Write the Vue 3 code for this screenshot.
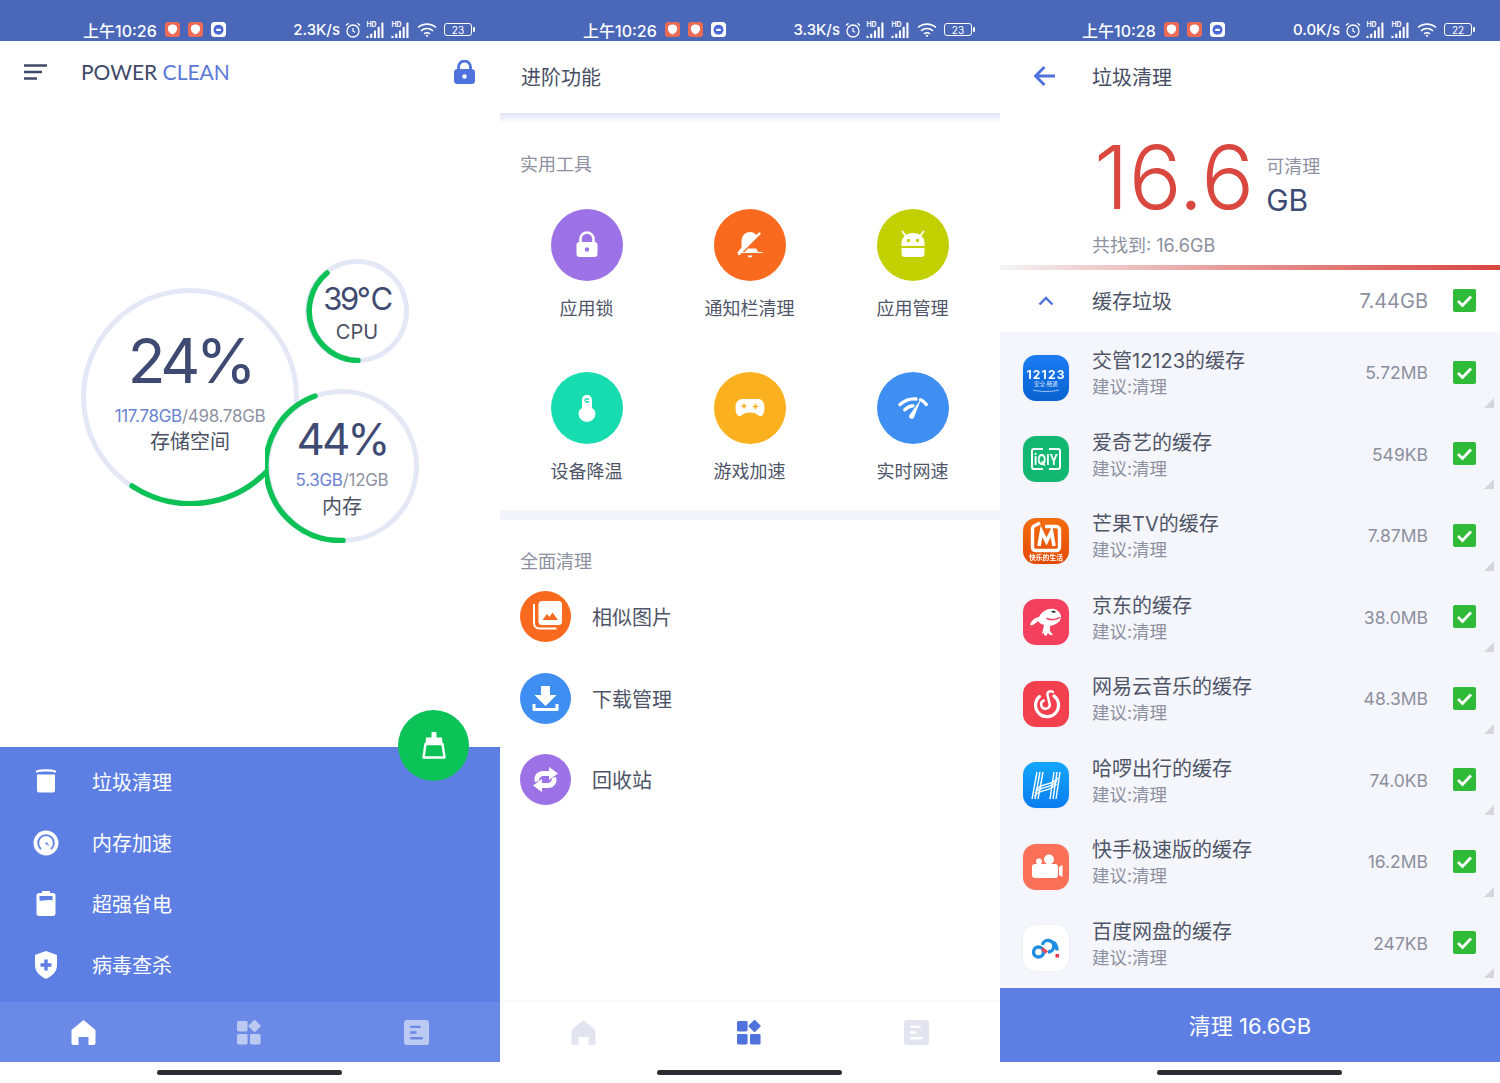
<script setup>
// status bar glyphs
const blob = (bg, fg) => `<rect width="15" height="15" rx="3" fill="${bg}"/><path d="M2.800 6.500c0-2.400 2-4 4.700-4s4.700 1.600 4.700 4c0 2.800-2.200 5-4.700 6-2.500-1-4.700-3.200-4.700-6z" fill="${fg}"/>`
const botIcon = `<rect width="15" height="15" rx="3.500" fill="#fff"/><circle cx="7.500" cy="7.800" r="5" fill="#4a67d8"/><rect x="5" y="6.800" width="5" height="2.200" rx="1" fill="#fff"/>`
const signal = `<text x="0" y="6" font-size="6.500" font-weight="700" fill="#fff">HD</text><g fill="#fff"><rect x="0" y="14" width="2" height="2"/><rect x="3.500" y="12" width="2" height="4"/><rect x="7" y="9" width="2" height="7"/><rect x="10.500" y="5.500" width="2" height="10.500"/><rect x="14" y="1.500" width="2" height="14.500"/></g>`

const screens = [
  { time: '上午10:26', speed: '2.3K/s', battery: '23' },
  { time: '上午10:26', speed: '3.3K/s', battery: '23' },
  { time: '上午10:28', speed: '0.0K/s', battery: '22' }
]

const statusIcons = [blob('#ea6a55', '#fff'), blob('#ea6a55', '#fff'), botIcon]

const gauges = [
  {
    id: 'disk', left: 81, top: 288, size: 218, big: '24%', used: '117.78GB', total: '/498.78GB', label: '存储空间',
    arc: 'M51 198 A106.500 106.500 0 0 0 189 180'
  },
  {
    id: 'cpu', left: 305, top: 259, size: 104, big: '39℃', label: 'CPU',
    arc: 'M22 14 A49.500 49.500 0 0 0 53 101.500'
  },
  {
    id: 'mem', left: 265, top: 389, size: 154, big: '44%', used: '5.3GB', total: '/12GB', label: '内存',
    arc: 'M50 7 A74.500 74.500 0 0 0 78 151.500'
  }
]

const menu = [
  { label: '垃圾清理', icon: `<path d="M2 3.500c3-1.500 15-1.500 18 0" fill="none" stroke="#fff" stroke-width="2.200" stroke-linecap="round"/><path d="M2 6.500h18v16c0 1.300-1 2-2 2H4c-1 0-2-.7-2-2z" fill="#fff"/>` },
  { label: '内存加速', icon: `<circle cx="11" cy="14" r="12.500" fill="#fff"/><path d="M5.500 19.500a7.800 7.800 0 1 1 11 0" fill="none" stroke="#5d7fe4" stroke-width="1.800" stroke-linecap="round"/><path d="M10 14.500l1.500-1.500 3.500 4.500z" fill="#5d7fe4"/>` },
  { label: '超强省电', icon: `<path d="M7 1h8v2h3c1.500 0 2.500 1 2.500 2.500v18c0 1.500-1 2.500-2.500 2.500H4c-1.500 0-2.500-1-2.500-2.500v-18C1.500 4 2.500 3 4 3h3z" fill="#fff"/><path d="M4.500 6h13v4.500c-4-1.500-9 1-13 0z" fill="#5d7fe4"/>` },
  { label: '病毒查杀', icon: `<path d="M11 0l11 4v10c0 7-5 11-11 14C5 25 0 21 0 14V4z" fill="#fff"/><path d="M9.300 8.500h3.400v3.800h3.800v3.400h-3.800v3.800H9.300v-3.800H5.500v-3.400h3.800z" fill="#5d7fe4"/>` }
]

const tools = [
  { label: '应用锁', color: '#9d72e6', icon: `<rect x="25.500" y="33" width="21" height="15" rx="3" fill="#fff"/><path d="M29.500 34v-4a6.500 6.500 0 0 1 13 0v4" fill="none" stroke="#fff" stroke-width="2.600"/><circle cx="36" cy="40.500" r="2.200" fill="#9d72e6"/>` },
  { label: '通知栏清理', color: '#f96a1e', icon: `<path d="M36 23c-5.500 0-8.500 4.500-8.500 9.500v6l-4.500 5.500h26l-4.500-5.500v-6c0-5-3-9.500-8.500-9.500z" fill="#fff"/><path d="M46 23L27 43h22V23z" fill="#f96a1e"/><path d="M45.500 24.500L25 45" stroke="#fff" stroke-width="2.400" stroke-linecap="round"/><path d="M30 44h15l-3-4.500h-8z" fill="#fff"/><path d="M33.500 46.500h5l-1 1.800h-3z" fill="#fff"/>` },
  { label: '应用管理', color: '#c3d000', icon: `<path d="M24.500 37v-3c0-6 5-10 11.500-10s11.500 4 11.500 10v3z" fill="#fff"/><path d="M24.500 39h23v6c0 1.500-1.200 3-3 3h-17c-1.800 0-3-1.500-3-3z" fill="#fff"/><path d="M28 26l-2.500-3.500M44 26l2.500-3.500" stroke="#fff" stroke-width="1.800" stroke-linecap="round"/><circle cx="31.500" cy="31.500" r="1.700" fill="#c3d000"/><circle cx="40.500" cy="31.500" r="1.700" fill="#c3d000"/>` },
  { label: '设备降温', color: '#17dcb0', icon: `<path d="M31 28c0-3 2-5 5-5s5 2 5 5v8c2.500 1.500 3.500 3.500 3.500 5.500a8.500 8.500 0 0 1-17 0c0-2 1-4 3.500-5.500z" fill="#fff"/><path d="M38 27h-2.500a1.500 1.500 0 0 0 0 3H38" fill="none" stroke="#17dcb0" stroke-width="1.300"/>` },
  { label: '游戏加速', color: '#fbb11f', icon: `<path d="M28 27h16c4 0 6.500 3.500 6.500 9 0 3.500-1 7.500-3.500 8-2.500.5-4.500-3.500-11-3.500S27.500 44.500 25 44c-2.500-.5-3.500-4.500-3.500-8 0-5.500 2.500-9 6.500-9z" fill="#fff"/><path d="M30 31.500v5M27.500 34h5" stroke="#fbb11f" stroke-width="1.500"/><path d="M41.500 31l1 2.500 2.500 1-2.500 1-1 2.500-1-2.500-2.500-1 2.500-1z" fill="#fbb11f"/>` },
  { label: '实时网速', color: '#3f8ff3', icon: `<path d="M23 32.500c4.500-4 10-6 16-5.500M43.500 27.800c2.200.9 4.200 2.600 5.800 4.700" fill="none" stroke="#fff" stroke-width="3.400" stroke-linecap="round"/><path d="M27.800 37.700c2.500-2.400 5.200-3.800 8.200-4" fill="none" stroke="#fff" stroke-width="3.400" stroke-linecap="round"/><path d="M32.500 43L44 27l-7 18.500a2.300 2.300 0 0 1-4.500-2.500z" fill="#fff"/>` }
]

const cleaners = [
  { label: '相似图片', color: '#f96a1e', icon: `<path d="M14 13v19c0 3 2 5.500 5.500 5.500h17" fill="none" stroke="#fff" stroke-width="2"/><rect x="18.500" y="10" width="23.500" height="24" rx="3.500" fill="#fff"/><path d="M22.500 29l4.500-6 2.500 3 3-4.500 5.500 7.500z" fill="#f96a1e"/>` },
  { label: '下载管理', color: '#3f8ff3', icon: `<path d="M21 13h9v9h6.500L25.500 33 14.500 22H21z" fill="#fff"/><path d="M14 31v5.500h23V31" fill="none" stroke="#fff" stroke-width="3" stroke-linejoin="round"/>` },
  { label: '回收站', color: '#9d72e6', icon: `<path d="M15 28c-2-6 2-11 8-11h6v-4l9 6.500-9 6.500v-4h-5c-3 0-5 2-5 5z" fill="#fff"/><path d="M36 23c2 6-2 11-8 11h-6v4l-9-6.500 9-6.500v4h5c3 0 5-2 5-5z" fill="#fff"/>` }
]

const squircle = (fill) => `<rect width="46" height="46" rx="13" fill="${fill}"/>`
const appIcons = {
  traffic: `<defs><linearGradient id="g1" x1="0" y1="0" x2="0" y2="1"><stop offset="0" stop-color="#1b7cf3"/><stop offset="1" stop-color="#0a62cf"/></linearGradient></defs>${squircle('url(#g1)')}<text x="23" y="23.500" text-anchor="middle" font-size="12" font-weight="700" letter-spacing="1.200" fill="#fff">12123</text><text x="23" y="31" text-anchor="middle" font-size="5.500" fill="#dfeaff">安全·畅通</text><path d="M10 35c8 2 18 2 26 0" stroke="#fff" stroke-width=".6" fill="none"/>`,
  iqiyi: `${squircle('#12b872')}<path d="M20 13H11c-1 0-2 1-2 2v16c0 1 1 2 2 2h9M26 13h9c1 0 2 1 2 2v16c0 1-1 2-2 2h-9" fill="none" stroke="#fff" stroke-width="2"/><text x="23" y="28.500" text-anchor="middle" font-size="15" font-weight="700" textLength="24" lengthAdjust="spacingAndGlyphs" fill="#fff">iQIY</text>`,
  mango: `<defs><linearGradient id="g3" x1="0" y1="0" x2="0" y2="1"><stop offset="0" stop-color="#f36d10"/><stop offset="1" stop-color="#e24a03"/></linearGradient></defs>${squircle('url(#g3)')}<path d="M17 5L11 8c-1 .5-1.500 1.500-1.500 3v18c0 2 1 3.500 3 3.500h21c1.500 0 3-1.500 3-3.500V12c0-2-1.500-3.500-3-3.500H22" fill="none" stroke="#fff" stroke-width="3.400"/><path d="M16 28l2.500-14.500 5 10 5-10L31 28" fill="none" stroke="#fff" stroke-width="3.600"/><text x="23" y="42" text-anchor="middle" font-size="6.800" font-weight="700" fill="#fff">快乐的生活</text>`,
  jd: `${squircle('#f4405c')}<path d="M7 26c1-4 4-7 9-8 3-6 9-9 15-8 4 1 7 4 7 8 0 5-6 8-11 9v5l3 4h-3l-2-2-2 3-2-1 0-2-2 1 2-9c-3-1-5-2-6-4-3 3-6 5-8 4z" fill="#fff"/><path d="M28 12.500c1.500-1 3.500-1 5 .5-1.500 1-3.500 1-5-.5z" fill="#222"/><path d="M24 19.500c4 1.800 9 1.200 12.500-.8" fill="none" stroke="#f4405c" stroke-width="1.500" stroke-linecap="round"/>`,
  netease: `${squircle('#f3404f')}<path d="M16.500 15.500a11.500 11.500 0 1 0 14.500-.5" fill="none" stroke="#fff" stroke-width="3.200" stroke-linecap="round"/><path d="M30 11c-3-1.500-6-.5-5.500 3l2.300 9.500a4.300 4.300 0 1 1-6-4" fill="none" stroke="#fff" stroke-width="2.500" stroke-linecap="round"/>`,
  hello: `<defs><linearGradient id="g6" x1="0" y1="0" x2="0" y2="1"><stop offset="0" stop-color="#12a6fb"/><stop offset="1" stop-color="#0a7df0"/></linearGradient></defs>${squircle('url(#g6)')}<g fill="none" stroke="#fff" stroke-width="1.400"><path d="M14 10L9 37M17 10l-5 27M20 10l-5 27M31 10l-4 27M34 10l-4 27M37 10l-4 27"/><path d="M13 28c6-8 14-3 22-12M12 31c6-8 14-3 22-12M11.500 34c6-8 14-3 22-12"/></g>`,
  kuaishou: `${squircle('#fb7157')}<circle cx="16" cy="17.500" r="3" fill="#fff"/><circle cx="26" cy="15.500" r="5" fill="#fff"/><rect x="9" y="20" width="26" height="14" rx="3" fill="#fff"/><path d="M36 23l3.500-2v12l-3.500-2z" fill="#fff"/>`,
  baidu: `${squircle('#ffffff')}<g fill="none" stroke-width="3.400"><circle cx="15.500" cy="27" r="5" stroke="#1f8ee0"/><path d="M25 27a5.800 5.800 0 1 0-5.600-7.200" stroke="#1f8ee0"/><path d="M19 23.500l5 4" stroke="#e8475a"/><path d="M30 17c2.500 1.500 4 4.500 4 8.500" stroke="#1f8ee0"/></g><rect x="32.500" y="29" width="3.500" height="3.500" fill="#e8344c"/>`
}

const rows = [
  { name: '交管12123的缓存', size: '5.72MB', icon: appIcons.traffic },
  { name: '爱奇艺的缓存', size: '549KB', icon: appIcons.iqiyi },
  { name: '芒果TV的缓存', size: '7.87MB', icon: appIcons.mango },
  { name: '京东的缓存', size: '38.0MB', icon: appIcons.jd },
  { name: '网易云音乐的缓存', size: '48.3MB', icon: appIcons.netease },
  { name: '哈啰出行的缓存', size: '74.0KB', icon: appIcons.hello },
  { name: '快手极速版的缓存', size: '16.2MB', icon: appIcons.kuaishou },
  { name: '百度网盘的缓存', size: '247KB', icon: appIcons.baidu }
]

const navHome = `<path d="M12 0L24 10v13c0 1-1 2-2 2h-5v-8H7v8H2c-1 0-2-1-2-2V10z"/>`
const navGrid = `<rect x="0" y="1" width="11" height="11" rx="1.500"/><rect x="13.500" y="1.500" width="9.500" height="9.500" rx="1" transform="rotate(45 18.250 6.250)"/><rect x="0" y="14.500" width="11" height="11" rx="1.500"/><rect x="13.500" y="14.500" width="11" height="11" rx="1.500"/>`
const navDoc = (cut) => `<rect x="0" y="0" width="24" height="24" rx="3"/><path d="M6 6.500h10M6 12h6M6 17.500h12" stroke="${cut}" stroke-width="2.200" fill="none"/>`
</script>

<template>
  <div class="page">
    <!-- Home screen -->
    <section class="phone">
      <header class="status">
        <span class="clock">{{ screens[0].time }}</span>
        <svg v-for="(ic, i) in statusIcons" :key="i" class="note" viewBox="0 0 15 15" v-html="ic"></svg>
        <div class="status-right">
          <span class="speed">{{ screens[0].speed }}</span>
          <svg class="alarm" viewBox="0 0 16 16"><circle cx="8" cy="9" r="6" fill="none" stroke="#fff" stroke-width="1.300"/><path d="M8 6v3.200l2.200 1M1 3.500L3.500 1.200M15 3.500l-2.500-2.300" fill="none" stroke="#fff" stroke-width="1.200"/></svg>
          <svg class="sig" viewBox="0 0 17 16" v-html="signal"></svg>
          <svg class="sig" viewBox="0 0 17 16" v-html="signal"></svg>
          <svg class="wifi" viewBox="0 0 20 15"><path d="M1 5.500c5-4.500 13-4.500 18 0M4 8.800c3.500-3 8.500-3 12 0M7 11.800c1.800-1.300 4.200-1.300 6 0" fill="none" stroke="#fff" stroke-width="1.600"/><circle cx="10" cy="13.800" r="1.100" fill="#fff"/></svg>
          <span class="batt"><i>{{ screens[0].battery }}</i></span>
        </div>
      </header>

      <div class="top-bar">
        <svg class="menu-btn" viewBox="0 0 23 16"><path d="M0 1.500h23M0 8h18M0 14.500h13" stroke="#3f4868" stroke-width="2.600"/></svg>
        <h1 class="brand">POWER <span>CLEAN</span></h1>
        <svg class="lock" viewBox="0 0 21 24"><path d="M4.500 11V7a6 6 0 0 1 12 0v4" fill="none" stroke="#4f72dc" stroke-width="2.800"/><rect x="0" y="9" width="21" height="15" rx="3.500" fill="#4f72dc"/><circle cx="10.500" cy="16.500" r="2.200" fill="#fff"/></svg>
      </div>

      <div class="gauges">
        <div
          v-for="g in gauges"
          :key="g.id"
          class="gauge"
          :class="g.id"
          :style="{ left: g.left + 'px', top: g.top - 103 + 'px', width: g.size + 'px', height: g.size + 'px' }"
        >
          <svg class="ring" :viewBox="`0 0 ${g.size} ${g.size}`">
            <circle :cx="g.size / 2" :cy="g.size / 2" :r="g.size / 2 - 2.500" fill="#fff" stroke="#e4e8f6" stroke-width="5"/>
            <path :d="g.arc" fill="none" stroke="#0cc155" stroke-width="5.500" stroke-linecap="round"/>
          </svg>
          <div class="big">{{ g.big }}</div>
          <div v-if="g.used" class="amount"><b>{{ g.used }}</b>{{ g.total }}</div>
          <div class="gauge-label">{{ g.label }}</div>
        </div>
      </div>

      <div class="feature-panel">
        <button class="fab">
          <svg viewBox="0 0 24 27" width="24" height="27"><rect x="9.500" y="0" width="5" height="7" rx="1" fill="#fff"/><path d="M4 5.500h16l.5 7H3.500z" fill="#fff"/><path d="M3.500 12h17l2 13.500H1.500z" fill="none" stroke="#fff" stroke-width="2.400" stroke-linejoin="round"/></svg>
        </button>
        <div v-for="m in menu" :key="m.label" class="feature">
          <svg class="feature-icon" viewBox="0 0 22 28" v-html="m.icon"></svg>
          <span>{{ m.label }}</span>
        </div>
      </div>

      <nav class="tabs tabs-blue">
        <svg viewBox="0 0 24 25" fill="#fff" v-html="navHome"></svg>
        <svg viewBox="0 0 26 26" fill="#fff" opacity=".55" v-html="navGrid"></svg>
        <svg viewBox="0 0 24 24" fill="#fff" opacity=".55" v-html="navDoc('#6b89e6')"></svg>
      </nav>
      <div class="home-area"><i></i></div>
    </section>

    <!-- Advanced features -->
    <section class="phone">
      <header class="status">
        <span class="clock">{{ screens[1].time }}</span>
        <svg v-for="(ic, i) in statusIcons" :key="i" class="note" viewBox="0 0 15 15" v-html="ic"></svg>
        <div class="status-right">
          <span class="speed">{{ screens[1].speed }}</span>
          <svg class="alarm" viewBox="0 0 16 16"><circle cx="8" cy="9" r="6" fill="none" stroke="#fff" stroke-width="1.300"/><path d="M8 6v3.200l2.200 1M1 3.500L3.500 1.200M15 3.500l-2.500-2.300" fill="none" stroke="#fff" stroke-width="1.200"/></svg>
          <svg class="sig" viewBox="0 0 17 16" v-html="signal"></svg>
          <svg class="sig" viewBox="0 0 17 16" v-html="signal"></svg>
          <svg class="wifi" viewBox="0 0 20 15"><path d="M1 5.500c5-4.500 13-4.500 18 0M4 8.800c3.500-3 8.500-3 12 0M7 11.800c1.800-1.300 4.200-1.300 6 0" fill="none" stroke="#fff" stroke-width="1.600"/><circle cx="10" cy="13.800" r="1.100" fill="#fff"/></svg>
          <span class="batt"><i>{{ screens[1].battery }}</i></span>
        </div>
      </header>

      <div class="title-bar shadowed"><h2>进阶功能</h2></div>

      <div class="advanced">
        <div class="tools-block">
          <h3 class="section">实用工具</h3>
          <div class="tool-grid">
            <div v-for="t in tools" :key="t.label" class="tool">
              <svg class="tool-icon" viewBox="0 0 72 72">
                <circle cx="36" cy="36" r="36" :fill="t.color"/>
                <g v-html="t.icon"></g>
              </svg>
              <span>{{ t.label }}</span>
            </div>
          </div>
        </div>

        <div class="clean-block">
          <h3 class="section">全面清理</h3>
          <div v-for="c in cleaners" :key="c.label" class="clean-row">
            <svg class="clean-icon" viewBox="0 0 51 51">
              <circle cx="25.500" cy="25.500" r="25.500" :fill="c.color"/>
              <g v-html="c.icon"></g>
            </svg>
            <span>{{ c.label }}</span>
          </div>
        </div>
      </div>

      <nav class="tabs tabs-white">
        <svg viewBox="0 0 24 25" fill="#e2e5ef" v-html="navHome"></svg>
        <svg viewBox="0 0 26 26" fill="#4f72dc" v-html="navGrid"></svg>
        <svg viewBox="0 0 24 24" fill="#e2e5ef" v-html="navDoc('#fff')"></svg>
      </nav>
      <div class="home-area"><i></i></div>
    </section>

    <!-- Junk clean -->
    <section class="phone">
      <header class="status status-shift">
        <span class="clock">{{ screens[2].time }}</span>
        <svg v-for="(ic, i) in statusIcons" :key="i" class="note" viewBox="0 0 15 15" v-html="ic"></svg>
        <div class="status-right">
          <span class="speed">{{ screens[2].speed }}</span>
          <svg class="alarm" viewBox="0 0 16 16"><circle cx="8" cy="9" r="6" fill="none" stroke="#fff" stroke-width="1.300"/><path d="M8 6v3.200l2.200 1M1 3.500L3.500 1.200M15 3.500l-2.500-2.300" fill="none" stroke="#fff" stroke-width="1.200"/></svg>
          <svg class="sig" viewBox="0 0 17 16" v-html="signal"></svg>
          <svg class="sig" viewBox="0 0 17 16" v-html="signal"></svg>
          <svg class="wifi" viewBox="0 0 20 15"><path d="M1 5.500c5-4.500 13-4.500 18 0M4 8.800c3.500-3 8.500-3 12 0M7 11.800c1.800-1.300 4.200-1.300 6 0" fill="none" stroke="#fff" stroke-width="1.600"/><circle cx="10" cy="13.800" r="1.100" fill="#fff"/></svg>
          <span class="batt"><i>{{ screens[2].battery }}</i></span>
        </div>
      </header>

      <div class="title-bar with-back">
        <svg class="back" viewBox="0 0 22 20"><path d="M21 10H2M10.500 1L1.500 10l9 9" fill="none" stroke="#4f72dc" stroke-width="2.800"/></svg>
        <h2>垃圾清理</h2>
      </div>

      <div class="summary">
        <div class="total">
          <span class="total-num">16.6</span>
          <div class="total-side">
            <span class="total-hint">可清理</span>
            <span class="total-unit">GB</span>
          </div>
        </div>
        <p class="found">共找到: 16.6GB</p>
      </div>
      <div class="red-line"></div>

      <div class="group-row">
        <svg class="chevron" viewBox="0 0 16 10"><path d="M1.500 8.500L8 2l6.500 6.500" fill="none" stroke="#4f72dc" stroke-width="2.400"/></svg>
        <span class="group-name">缓存垃圾</span>
        <span class="group-size">7.44GB</span>
        <svg class="check" viewBox="0 0 23 23"><rect width="23" height="23" rx="2" fill="#2fba38"/><path d="M5 12l4.500 4.500L18 7.500" fill="none" stroke="#fff" stroke-width="2.800"/></svg>
      </div>

      <div class="junk-list">
        <div v-for="r in rows" :key="r.name" class="junk-row">
          <svg class="app-icon" viewBox="0 0 46 46" v-html="r.icon"></svg>
          <div class="junk-text">
            <div class="junk-name">{{ r.name }}</div>
            <div class="junk-hint">建议:清理</div>
          </div>
          <span class="junk-size">{{ r.size }}</span>
          <svg class="check" viewBox="0 0 23 23"><rect width="23" height="23" rx="2" fill="#2fba38"/><path d="M5 12l4.500 4.500L18 7.500" fill="none" stroke="#fff" stroke-width="2.800"/></svg>
          <i class="corner"></i>
        </div>
      </div>

      <button class="clean-btn">清理 16.6GB</button>
      <div class="home-area"><i></i></div>
    </section>
  </div>
</template>

<style>
html,
body {
  margin: 0;
  background: #fff;
}
</style>

<style scoped>
.page {
  display: flex;
  width: 1500px;
  height: 1083px;
  overflow: hidden;
  font-family: Inter, "Noto Sans CJK SC", sans-serif;
  color: #4b5265;
}

.phone {
  position: relative;
  display: flex;
  flex-direction: column;
  width: 500px;
  height: 1083px;
  background: #fff;
}

h1, h2, h3, p {
  margin: 0;
  font-weight: 400;
}

/* Status bar */
.status {
  display: flex;
  align-items: center;
  flex: none;
  box-sizing: border-box;
  height: 41px;
  padding: 20px 25px 2px 83px;
  background: #4a67b8;
  color: #fff;
  font-size: 16px;
  font-weight: 500;
}

.status-shift {
  padding-left: 82px;
}

.clock {
  margin-right: 8px;
  white-space: nowrap;
}

.note {
  width: 15px;
  height: 15px;
  margin-right: 8px;
}

.status-right {
  display: flex;
  align-items: center;
  margin-left: auto;
}

.speed {
  font-size: 15px;
  margin-right: 5px;
}

.alarm {
  width: 16px;
  height: 16px;
  margin-right: 5px;
}

.sig {
  width: 19px;
  height: 17px;
  margin-right: 6px;
}

.wifi {
  width: 20px;
  height: 15px;
  margin: 0 7px 0 1px;
}

.batt {
  position: relative;
  display: flex;
  align-items: center;
  justify-content: center;
  box-sizing: border-box;
  width: 28px;
  height: 13px;
  margin-right: 3px;
  border: 1.300px solid #fff;
  border-radius: 3px;
}

.batt::after {
  content: "";
  position: absolute;
  right: -4px;
  top: 3px;
  width: 2px;
  height: 5px;
  background: #fff;
  border-radius: 1px;
}

.batt i {
  font-style: normal;
  font-size: 10px;
  font-weight: 400;
}

/* Home */
.top-bar {
  display: flex;
  align-items: center;
  flex: none;
  height: 62px;
  padding: 0 25px 0 24px;
}

.menu-btn {
  width: 23px;
  height: 16px;
  margin-right: 34px;
}

.brand {
  flex: 1;
  margin-bottom: 2px;
  font-family: Lato, "Noto Sans CJK SC", sans-serif;
  font-size: 21px;
  color: #41486a;
}

.brand span {
  color: #5b79d8;
}

.lock {
  width: 21px;
  height: 24px;
}

.gauges {
  position: relative;
  flex: 1;
}

.gauge {
  position: absolute;
  display: flex;
  flex-direction: column;
  align-items: center;
  justify-content: center;
  box-sizing: border-box;
}

.ring {
  position: absolute;
  inset: 0;
  width: 100%;
  height: 100%;
}

.big,
.amount,
.gauge-label {
  position: relative;
  white-space: nowrap;
}

.big {
  color: #3f4a73;
}

.amount {
  color: #8e93a3;
}

.amount b {
  color: #6b83d2;
  font-weight: 400;
}

.gauge-label {
  color: #4b5163;
  font-size: 20px;
  line-height: 26px;
}

.disk {
  padding-bottom: 13px;
}

.disk .big {
  font-size: 62px;
  line-height: 70px;
  letter-spacing: -4.500px;
}

.disk .amount {
  margin-top: 9px;
  font-size: 17px;
  line-height: 22px;
  letter-spacing: -0.3px;
}

.disk .gauge-label {
  margin-top: 2px;
}

.mem {
  padding-top: 2px;
}

.mem .big {
  font-size: 44px;
  line-height: 50px;
  letter-spacing: -3px;
}

.mem .amount {
  margin-top: 5px;
  font-size: 17px;
  line-height: 22px;
  letter-spacing: -0.3px;
}

.mem .gauge-label {
  margin-top: 3px;
}

.cpu {
  padding-top: 4px;
}

.cpu .big {
  font-size: 31px;
  line-height: 36px;
  letter-spacing: -2.500px;
}

.cpu .gauge-label {
  margin-top: 2px;
  font-size: 20px;
}

.feature-panel {
  position: relative;
  flex: none;
  height: 255px;
  background: #5d7fe4;
}

.fab {
  position: absolute;
  right: 31px;
  top: -37px;
  display: flex;
  align-items: center;
  justify-content: center;
  width: 71px;
  height: 71px;
  padding: 0;
  border: none;
  border-radius: 50%;
  background: #0bc356;
}

.feature {
  display: flex;
  align-items: center;
  height: 61px;
  padding-left: 34px;
  color: #fff;
  font-size: 20px;
}

.feature:first-of-type {
  margin-top: 4px;
}

.feature-icon {
  width: 24px;
  height: 28px;
  margin-right: 34px;
  overflow: visible;
}

.tabs {
  display: flex;
  flex: none;
  align-items: center;
  box-sizing: border-box;
  height: 60px;
}

.tabs svg {
  position: relative;
  width: 25px;
  height: 25px;
}

.tabs svg:nth-child(1) {
  margin-left: 71px;
}

.tabs svg:nth-child(2) {
  margin-left: 141px;
}

.tabs svg:nth-child(3) {
  margin-left: 142px;
}

.tabs-blue {
  background: #6b89e6;
}

.tabs-white {
  background: #fff;
  box-shadow: 0 -1px 3px rgba(80, 90, 140, 0.06);
}

.home-area {
  display: flex;
  justify-content: center;
  flex: none;
  height: 21px;
  background: #fff;
}

.home-area i {
  width: 185px;
  height: 5px;
  margin: 7.500px 1px 0 0;
  border-radius: 3px;
  background: #2b2d33;
}

/* Advanced features */
.title-bar {
  display: flex;
  align-items: center;
  flex: none;
  height: 72px;
  padding: 0 0 2px 21px;
  box-sizing: border-box;
}

.title-bar h2 {
  font-size: 20px;
  color: #474e63;
}

.shadowed {
  position: relative;
}

.shadowed::after {
  content: "";
  position: absolute;
  left: 0;
  right: 0;
  bottom: -10px;
  height: 10px;
  background: linear-gradient(#dfe3f7, #fff);
}

.advanced {
  display: flex;
  flex-direction: column;
  flex: 1;
}

.tools-block {
  height: 397px;
  border-bottom: 10px solid #f3f4fa;
  box-sizing: content-box;
}

.section {
  font-size: 18px;
  color: #8c90a0;
  padding-left: 20px;
}

.tools-block .section {
  padding-top: 39px;
  line-height: 26px;
}

.tool-grid {
  display: grid;
  grid-template-columns: repeat(3, 163px);
  grid-auto-rows: 163px;
  margin-top: 31px;
  padding-left: 5px;
}

.tool {
  display: flex;
  flex-direction: column;
  align-items: center;
  font-size: 18px;
  color: #4f5568;
}

.tool-icon {
  width: 72px;
  height: 72px;
  margin-bottom: 13px;
}

.clean-block .section {
  padding-top: 29px;
  line-height: 26px;
}

.clean-row {
  display: flex;
  align-items: center;
  height: 81.500px;
  padding-left: 20px;
  font-size: 20px;
  color: #4f5568;
}

.clean-block .section + .clean-row {
  margin-top: 1px;
}

.clean-icon {
  width: 51px;
  height: 51px;
  margin-right: 21px;
}

/* Junk clean */
.with-back {
  padding-left: 34px;
}

.back {
  width: 22px;
  height: 20px;
  margin-right: 36px;
}

.summary {
  flex: none;
  height: 152px;
  padding-left: 92px;
  box-sizing: border-box;
}

.total {
  display: flex;
  align-items: flex-start;
  height: 118px;
}

.total-num {
  margin: 9px 0 0 2px;
  font-size: 88px;
  font-weight: 300;
  line-height: 110px;
  color: #d9473f;
}

.total-side {
  display: flex;
  flex-direction: column;
  margin: 41px 0 0 12px;
}

.total-hint {
  font-size: 18px;
  line-height: 26px;
  color: #8c90a0;
}

.total-unit {
  margin-top: 2px;
  font-size: 30px;
  line-height: 36px;
  color: #3d4a72;
}

.found {
  margin-top: 2px;
  font-size: 18px;
  line-height: 26px;
  color: #8c90a0;
}

.red-line {
  flex: none;
  height: 5px;
  background: linear-gradient(90deg, #f4f4f6, #e79a98 45%, #d8453f);
}

.group-row {
  display: flex;
  align-items: center;
  flex: none;
  height: 62px;
  padding: 0 24px 1px 38px;
  box-sizing: border-box;
}

.chevron {
  width: 16px;
  height: 10px;
  margin-right: 38px;
}

.group-name {
  flex: 1;
  font-size: 20px;
  color: #4f5568;
}

.group-size {
  margin-right: 25px;
  font-size: 20px;
  color: #8c90a0;
}

.check {
  flex: none;
  width: 23px;
  height: 23px;
  margin-bottom: 1px;
}

.junk-list {
  flex: 1;
  background: #f5f6fb;
}

.junk-row {
  position: relative;
  display: flex;
  align-items: center;
  height: 81.500px;
  padding: 0 24px 0 23px;
}

.app-icon {
  flex: none;
  width: 46px;
  height: 46px;
  margin: 10px 23px 0 0;
  filter: drop-shadow(0 0 1px rgba(120, 130, 170, 0.12));
}

.junk-text {
  flex: 1;
  margin-top: 2px;
}

.junk-name {
  font-size: 20px;
  line-height: 26px;
  color: #4f5568;
}

.junk-hint {
  font-size: 17.500px;
  line-height: 25px;
  color: #8c90a0;
}

.junk-size {
  margin-right: 25px;
  font-size: 17.500px;
  color: #8c90a0;
}

.corner {
  position: absolute;
  right: 6px;
  bottom: 6px;
  width: 0;
  height: 0;
  border-style: solid;
  border-width: 0 0 10px 10px;
  border-color: transparent transparent #d3d6de transparent;
}

.clean-btn {
  flex: none;
  height: 74px;
  padding: 0 0 2px;
  border: none;
  background: #5d7fe4;
  color: #fff;
  font-family: inherit;
  font-size: 22px;
}
</style>
